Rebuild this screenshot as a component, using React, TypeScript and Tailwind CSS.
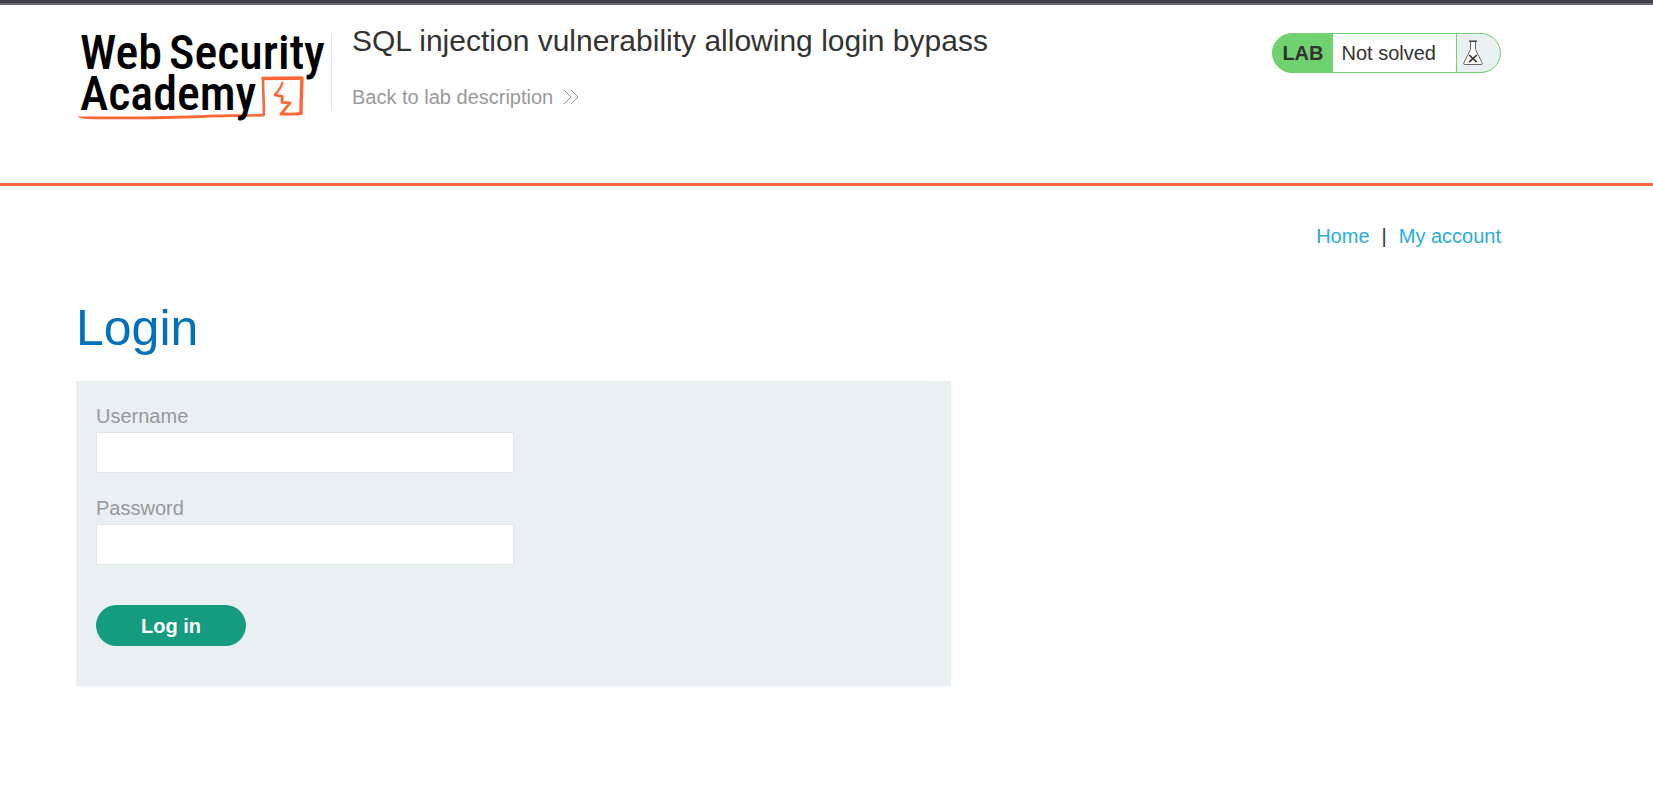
import { useId } from "react";

function Logo() {
  return (
    <svg
      viewBox="0 0 256 92"
      className="block h-[92px] w-[256px] shrink-0 overflow-visible"
      role="img"
      aria-label="Web Security Academy"
    >
      <path
        fill="#ff6633"
        d="M1 83.4 C40 84 90 83.2 125 82.2 C150 81 168 81.6 187 80.8 L187.8 83.4 C168 84 150 84 125 85 C90 86.4 40 86.6 12 86 C7 85.6 3 84.8 1 83.4 Z"
      />
      <g fill="none" stroke="#ff6633" strokeLinecap="round" strokeLinejoin="round">
        <path d="M187.8 82 C188 70 187 56 187 45" strokeWidth="2.6" />
        <path d="M187 45.5 L226 45 C225.5 58 225 70 225 80.5" strokeWidth="3.4" />
        <path d="M225 80.5 C221 81.2 217 81.4 205 81" strokeWidth="2.8" />
        <path
          d="M205.5 80.6 L214 69.8 C211 69.6 208.5 69.6 206 69.4 L206.2 63.4 L199 62"
          strokeWidth="2.8"
        />
        <path d="M199 61.8 C202 58 204.8 56 206.4 50" strokeWidth="2.4" />
      </g>
      <g
        fill="#000"
        className="text-[48px] font-medium"
        fontFamily="'Roboto Condensed', 'Liberation Sans', sans-serif"
      >
        <text x="4" y="36">Web</text>
        <text x="93" y="36">Security</text>
        <text x="4" y="77">Academy</text>
      </g>
    </svg>
  );
}

function DoubleChevron() {
  return (
    <svg
      viewBox="0 0 16 16"
      className="h-4 w-4"
      fill="none"
      stroke="currentColor"
      strokeWidth="1"
      aria-hidden="true"
    >
      <path d="M1 1 L8 8 L1 15 M8 1 L15 8 L8 15" />
    </svg>
  );
}

function Flask() {
  return (
    <svg viewBox="0 0 20 26" className="h-[26px] w-5" fill="none" aria-hidden="true">
      <path
        d="M7.5 1.5 V9.5 L0.8 23 Q0.2 24.5 1.8 24.5 H18.2 Q19.8 24.5 19.2 23 L12.5 9.5 V1.5 Z"
        fill="#fff"
        stroke="#666"
        strokeWidth="1"
      />
      <path d="M6 1.2 H14" stroke="#333332" strokeWidth="1.2" />
      <path d="M6.2 15 L13.8 22.2 M13.8 15 L6.2 22.2" stroke="#333332" strokeWidth="1.6" />
    </svg>
  );
}

function LabStatus() {
  return (
    <div className="mt-[10px] flex h-10 shrink-0 overflow-hidden rounded-full border border-[#6fd26f] bg-[#6fd26f]">
      <span className="flex items-center px-[9px] font-bold">LAB</span>
      <span className="flex items-center bg-white pr-5 pl-[9px]">Not solved</span>
      <span className="ml-px flex items-center bg-[#eaeff2] pr-[17px] pl-[6px]">
        <Flask />
      </span>
    </div>
  );
}

function Field({ label, type }: { label: string; type: string }) {
  const id = useId();
  return (
    <div className="flex flex-col gap-1">
      <label htmlFor={id} className="text-[#999999]">
        {label}
      </label>
      <input
        id={id}
        type={type}
        className="h-[41px] w-full max-w-[418px] border border-[#e4e4e4] bg-white px-2 outline-none focus:border-[#0071bc]"
      />
    </div>
  );
}

export default function App() {
  return (
    <div className="min-h-screen bg-white font-['Liberation_Sans',Arial,sans-serif] text-[20px] leading-6 text-[#333332]">
      <div className="h-[5px] border-b-2 border-[#656571] bg-[#3d3d4c]" />
      <header className="border-b-[3px] border-[#ff6633]">
        <div className="mx-auto flex min-h-[178px] max-w-[1501px] pt-[18px] pr-[76px]">
          <a href="#academy" className="mt-[10px] self-start">
            <Logo />
          </a>
          <div className="mt-[10px] mr-5 -ml-px h-[78px] w-px shrink-0 bg-[#e4e4e4]" />
          <div className="flex grow flex-col items-start gap-[26px]">
            <h1 className="text-[30px] leading-9">
              SQL injection vulnerability allowing login bypass
            </h1>
            <a href="#lab" className="flex items-center gap-[10px] text-[#999999]">
              Back to lab description
              <DoubleChevron />
            </a>
          </div>
          <LabStatus />
        </div>
      </header>
      <main className="mx-auto max-w-[1501px] pt-[38px] pr-[76px]">
        <nav className="flex justify-end gap-3">
          <a href="#home" className="text-[#29abe2]">
            Home
          </a>
          <span>|</span>
          <a href="#my-account" className="text-[#29abe2]">
            My account
          </a>
        </nav>
        <h2 className="mt-[50px] text-[50px] leading-[60px] text-[#0071bc]">Login</h2>
        <form
          className="mt-[23px] flex w-full max-w-[875px] flex-col gap-[23px] bg-[#eaeff2] px-5 pt-[23px] pb-10"
          onSubmit={(e) => e.preventDefault()}
        >
          <Field label="Username" type="text" />
          <Field label="Password" type="password" />
          <button
            type="submit"
            className="mt-[17px] h-[41px] w-[150px] rounded-full bg-[#159b80] font-bold text-white"
          >
            Log in
          </button>
        </form>
      </main>
    </div>
  );
}
